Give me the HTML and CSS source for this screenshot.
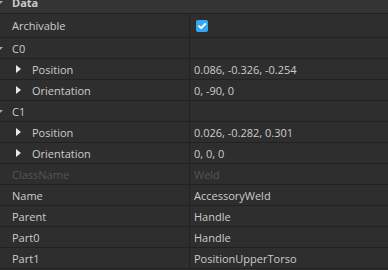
FILE: index.html
```html
<!DOCTYPE html>
<html lang="en">
<head>
    <meta charset="UTF-8">
    <title>Properties - Data</title>
    <link rel="stylesheet" href="styles.css">
</head>
<body>
    <div class="panel">
        <!-- Заголовок категории -->
        <div class="category">
            <span class="caret down"></span>
            <span>Data</span>
        </div>

        <div class="row tall">
            <div class="name">Archivable</div>
            <div class="value">
                <span class="checkbox">
                    <svg width="12" height="12" viewBox="0 0 12 12"><path d="M3 6.2 L5.1 8.2 L9.2 4" fill="none" stroke="#fff" stroke-width="1.8" stroke-linecap="round" stroke-linejoin="round"/></svg>
                </span>
            </div>
        </div>

        <div class="row">
            <div class="name"><span class="caret down"></span>C0</div>
            <div class="value"></div>
        </div>
        <div class="row">
            <div class="name sub"><span class="tri"></span>Position</div>
            <div class="value">0.086, -0.326, -0.254</div>
        </div>
        <div class="row">
            <div class="name sub"><span class="tri"></span>Orientation</div>
            <div class="value">0, -90, 0</div>
        </div>

        <div class="row">
            <div class="name"><span class="caret down"></span>C1</div>
            <div class="value"></div>
        </div>
        <div class="row">
            <div class="name sub"><span class="tri"></span>Position</div>
            <div class="value">0.026, -0.282, 0.301</div>
        </div>
        <div class="row">
            <div class="name sub"><span class="tri"></span>Orientation</div>
            <div class="value">0, 0, 0</div>
        </div>

        <div class="row disabled">
            <div class="name">ClassName</div>
            <div class="value">Weld</div>
        </div>
        <div class="row">
            <div class="name">Name</div>
            <div class="value">AccessoryWeld</div>
        </div>
        <div class="row">
            <div class="name">Parent</div>
            <div class="value">Handle</div>
        </div>
        <div class="row">
            <div class="name">Part0</div>
            <div class="value">Handle</div>
        </div>
        <div class="row">
            <div class="name">Part1</div>
            <div class="value">PositionUpperTorso</div>
        </div>
    </div>
</body>
</html>
```
FILE: styles.css
```css
/* Тёмная тема панели свойств */
body {
    background-color: #2e2e2e;
    color: #cccccc;
    font-family: "Open Sans", "Noto Sans", sans-serif;
    font-size: 11px;
    margin: 0;
    overflow: hidden;
}

.panel {
    margin-top: -8px;
}

/* Заголовок категории */
.category {
    display: flex;
    align-items: center;
    height: 21px;
    padding-left: 12px;
    background-color: #353535;
    border-bottom: 1px solid #222222;
    font-weight: bold;
    position: relative;
}

/* Строки свойств */
.row {
    display: grid;
    grid-template-columns: 190px 1fr;
    height: 20px;
    border-bottom: 1px solid #222222;
}

.row.tall {
    height: 23px;
}

.name {
    display: flex;
    align-items: center;
    padding-left: 12px;
    border-right: 1px solid #222222;
    position: relative;
}

.name.sub {
    padding-left: 16px;
}

.value {
    display: flex;
    align-items: center;
    padding-left: 4px;
}

.row.disabled {
    color: #555555;
}

/* Стрелки раскрытия */
.tri {
    width: 0;
    height: 0;
    border-top: 4px solid transparent;
    border-bottom: 4px solid transparent;
    border-left: 5px solid #e8e8e8;
    margin-right: 11px;
}

.caret.down {
    position: absolute;
    left: -3px;
    top: 9px;
    width: 0;
    height: 0;
    border-left: 3px solid transparent;
    border-right: 3px solid transparent;
    border-top: 3px solid #aaaaaa;
}

/* Чекбокс */
.checkbox {
    display: flex;
    width: 12px;
    height: 12px;
    margin-left: 2px;
    border-radius: 2px;
    background-color: #35a8f5;
}
```
